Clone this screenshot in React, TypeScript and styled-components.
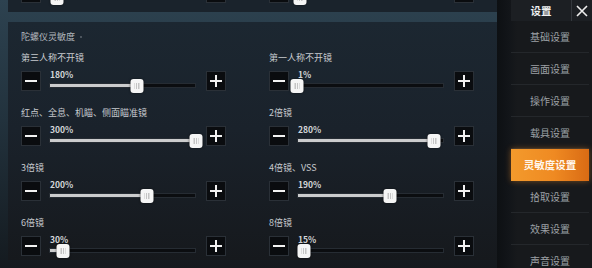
import styled, { createGlobalStyle } from 'styled-components';

const GlobalStyle = createGlobalStyle`
  * {
    box-sizing: border-box;
    margin: 0;
    padding: 0;
  }
  body {
    margin: 0;
    background: #12161a;
    font-family: "Noto Sans CJK SC", "Noto Sans", sans-serif;
  }
`;

interface SliderItem {
  label: string;
  value: number;
}

const MIN = 1;
const MAX = 300;

// last row of the section above, scrolled mostly out of view
const previousRow: SliderItem[] = [
  { label: '', value: 17 },
  { label: '', value: 7 },
];

const gyroRows: SliderItem[] = [
  { label: '第三人称不开镜', value: 180 },
  { label: '第一人称不开镜', value: 1 },
  { label: '红点、全息、机瞄、侧面瞄准镜', value: 300 },
  { label: '2倍镜', value: 280 },
  { label: '3倍镜', value: 200 },
  { label: '4倍镜、VSS', value: 190 },
  { label: '6倍镜', value: 30 },
  { label: '8倍镜', value: 15 },
];

const menuItems = ['基础设置', '画面设置', '操作设置', '载具设置', '灵敏度设置', '拾取设置', '效果设置', '声音设置'];
const ACTIVE = '灵敏度设置';

function MinusIcon() {
  return (
    <svg width="12" height="12" viewBox="0 0 12 12">
      <rect x="0" y="5" width="12" height="2" fill="#f2f2f2" />
    </svg>
  );
}

function PlusIcon() {
  return (
    <svg width="12" height="12" viewBox="0 0 12 12">
      <rect x="0" y="5" width="12" height="2" fill="#f2f2f2" />
      <rect x="5" y="0" width="2" height="12" fill="#f2f2f2" />
    </svg>
  );
}

function CloseIcon() {
  return (
    <svg width="12" height="12" viewBox="0 0 12 12">
      <path d="M1 1 L11 11 M11 1 L1 11" stroke="#eeeeee" strokeWidth="1.6" />
    </svg>
  );
}

function SliderCell({ item, bare = false }: { item: SliderItem; bare?: boolean }) {
  const ratio = (item.value - MIN) / (MAX - MIN);
  const pct = `${ratio * 100}%`;
  return (
    <Cell>
      <Label>{!bare && item.label}</Label>
      <Controls>
        <StepButton>
          <MinusIcon />
        </StepButton>
        <Track>
          {!bare && <Percent>{item.value}%</Percent>}
          <Rail>
            <Fill style={{ width: pct }} />
          </Rail>
          <Thumb style={{ left: pct }} />
        </Track>
        <StepButton>
          <PlusIcon />
        </StepButton>
      </Controls>
    </Cell>
  );
}

export default function App() {
  return (
    <>
      <GlobalStyle />
      <Screen>
        <Content>
          <Scroll>
            <PrevCard>
              <Grid>
                {previousRow.map((item, i) => (
                  <SliderCell key={i} item={item} bare />
                ))}
              </Grid>
            </PrevCard>
            <Card>
              <SectionTitle>
                陀螺仪灵敏度<Dot />
              </SectionTitle>
              <Grid>
                {gyroRows.map((item) => (
                  <SliderCell key={item.label} item={item} />
                ))}
              </Grid>
            </Card>
          </Scroll>
        </Content>
        <Sidebar>
          <Header>
            <HeaderTitle>设置</HeaderTitle>
            <CloseButton>
              <CloseIcon />
            </CloseButton>
          </Header>
          <Menu>
            {menuItems.map((m) => (
              <MenuItem key={m} $active={m === ACTIVE}>
                {m}
              </MenuItem>
            ))}
          </Menu>
        </Sidebar>
      </Screen>
    </>
  );
}

const Screen = styled.div`
  display: flex;
  width: 592px;
  height: 268px;
  overflow: hidden;
`;

const Content = styled.div`
  width: 497px;
  height: 100%;
  overflow: hidden;
  padding-left: 8px;
  background: linear-gradient(180deg, #2d4250 0%, #22323d 45%, #141a1f 100%);
`;

const Scroll = styled.div`
  display: flex;
  flex-direction: column;
  gap: 10px;
  margin-top: -37px;
`;

const PrevCard = styled.div`
  flex-shrink: 0;
  padding: 0 0 9px 13px;
  background: #1a232c;
`;

const Card = styled.div`
  flex-shrink: 0;
  padding: 7px 0 4px 13px;
  background: linear-gradient(180deg, #1c2731 0%, #1a222b 45%, #16191d 100%);
`;

const SectionTitle = styled.div`
  display: flex;
  align-items: center;
  height: 14px;
  margin-top: 1px;
  margin-bottom: 7px;
  font-size: 9px;
  line-height: 14px;
  color: #b3b8bd;
`;

const Dot = styled.span`
  width: 2px;
  height: 2px;
  margin-left: 5px;
  border-radius: 50%;
  background: #5d656d;
`;

const Grid = styled.div`
  display: grid;
  grid-template-columns: 205px 205px;
  column-gap: 43px;
  row-gap: 15px;
`;

const Cell = styled.div`
  display: flex;
  flex-direction: column;
  gap: 6px;
`;

const Label = styled.div`
  height: 14px;
  font-size: 9px;
  line-height: 14px;
  color: #c6cace;
  white-space: nowrap;
`;

const Controls = styled.div`
  display: flex;
  align-items: center;
  height: 20px;
`;

const StepButton = styled.div`
  display: flex;
  align-items: center;
  justify-content: center;
  width: 20px;
  height: 20px;
  flex-shrink: 0;
  background: #0a0c0f;
  border: 1px solid #2a3037;
`;

const Track = styled.div`
  position: relative;
  flex: 1;
  height: 20px;
  margin: 0 10px 0 8px;
`;

const Percent = styled.div`
  position: absolute;
  left: 1px;
  top: -2px;
  font-size: 8.5px;
  line-height: 10px;
  font-weight: 700;
  color: #d4d6d8;
`;

const Rail = styled.div`
  position: absolute;
  left: 0;
  right: 0;
  top: 12px;
  height: 5px;
  background: #0b0d10;
  border: 1px solid #262c33;
  overflow: hidden;
`;

const Fill = styled.div`
  margin: -1px 0 0 -1px;
  height: 5px;
  background: #cbcccd;
`;

const Thumb = styled.div`
  position: absolute;
  top: 8px;
  width: 13px;
  height: 14px;
  transform: translateX(-50%);
  border-radius: 3px;
  background: #f5f5f5;
  box-shadow: 0 0 2px rgba(0, 0, 0, 0.5);
  &::after {
    content: '';
    position: absolute;
    left: 4px;
    top: 4px;
    width: 5px;
    height: 6px;
    background: linear-gradient(90deg, #c4c4c4 0 1px, transparent 1px 2px, #c4c4c4 2px 3px, transparent 3px 4px, #c4c4c4 4px 5px);
  }
`;

const Sidebar = styled.div`
  display: flex;
  flex-direction: column;
  width: 95px;
  height: 100%;
  overflow: hidden;
  padding-left: 14px;
  background: linear-gradient(90deg, #0d1013 0px, #121519 12px, #17191c 20px, #17191c 100%);
`;

const Header = styled.div`
  display: flex;
  flex-shrink: 0;
  height: 21px;
  background: #1c1f23;
`;

const HeaderTitle = styled.div`
  display: flex;
  align-items: center;
  justify-content: center;
  flex: 1;
  font-size: 10.5px;
  font-weight: 700;
  color: #eceeef;
  border-right: 1px solid #34383d;
`;

const CloseButton = styled.div`
  display: flex;
  align-items: center;
  justify-content: center;
  width: 20px;
`;

const Menu = styled.div`
  display: flex;
  flex-direction: column;
  flex-shrink: 0;
  padding-right: 3px;
`;

const MenuItem = styled.div<{ $active: boolean }>`
  display: flex;
  align-items: center;
  justify-content: center;
  flex-shrink: 0;
  height: 32px;
  font-size: ${({ $active }) => ($active ? '10.5px' : '10px')};
  font-weight: ${({ $active }) => ($active ? 700 : 400)};
  color: ${({ $active }) => ($active ? '#fff7ee' : '#9ca0a5')};
  border-bottom: 1px solid ${({ $active }) => ($active ? 'transparent' : '#24272b')};
  background: ${({ $active }) =>
    $active ? 'linear-gradient(90deg, #f39a2c 0%, #ef8a22 55%, #d96b14 100%)' : 'transparent'};
  box-shadow: ${({ $active }) => ($active ? '0 0 6px rgba(240, 140, 40, 0.45)' : 'none')};
`;
